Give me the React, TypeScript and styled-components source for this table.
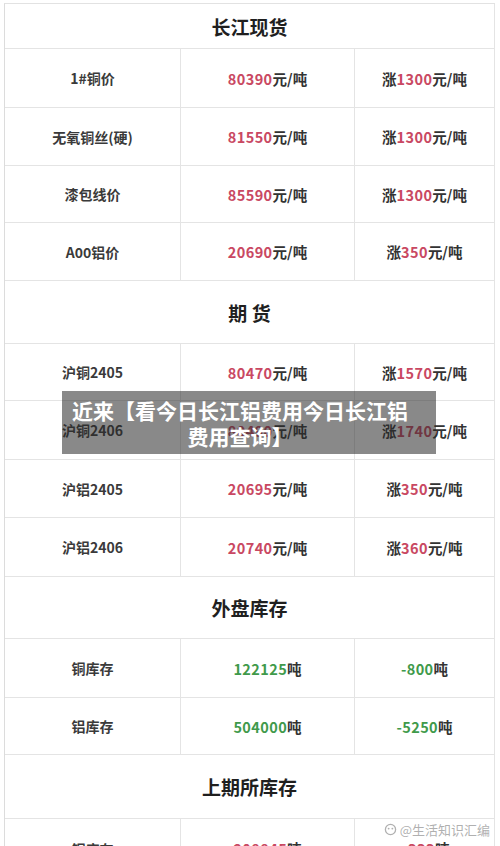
import React from "react";
import styled, { createGlobalStyle } from "styled-components";

const GlobalStyle = createGlobalStyle`
  html, body {
    margin: 0;
    padding: 0;
    background: #ffffff;
  }
  body {
    font-family: "Noto Sans CJK SC", "Noto Sans", sans-serif;
    color: #2a2a2a;
  }
`;

type Tone = "red" | "green";

type DataRow = {
  kind: "data";
  h: number;
  name: string;
  value: [string, string];
  change: [string, string, string];
  tone: Tone;
};
type HeadRow = { kind: "head"; h: number; title: string };
type Row = DataRow | HeadRow;

const rows: Row[] = [
  { kind: "head", h: 45, title: "长江现货" },
  { kind: "data", h: 59, name: "1#铜价", value: ["80390", "元/吨"], change: ["涨", "1300", "元/吨"], tone: "red" },
  { kind: "data", h: 58, name: "无氧铜丝(硬)", value: ["81550", "元/吨"], change: ["涨", "1300", "元/吨"], tone: "red" },
  { kind: "data", h: 57, name: "漆包线价", value: ["85590", "元/吨"], change: ["涨", "1300", "元/吨"], tone: "red" },
  { kind: "data", h: 58, name: "A00铝价", value: ["20690", "元/吨"], change: ["涨", "350", "元/吨"], tone: "red" },
  { kind: "head", h: 63, title: "期 货" },
  { kind: "data", h: 57, name: "沪铜2405", value: ["80470", "元/吨"], change: ["涨", "1570", "元/吨"], tone: "red" },
  { kind: "data", h: 59, name: "沪铜2406", value: ["80490", "元/吨"], change: ["涨", "1740", "元/吨"], tone: "red" },
  { kind: "data", h: 58, name: "沪铝2405", value: ["20695", "元/吨"], change: ["涨", "350", "元/吨"], tone: "red" },
  { kind: "data", h: 59, name: "沪铝2406", value: ["20740", "元/吨"], change: ["涨", "360", "元/吨"], tone: "red" },
  { kind: "head", h: 62, title: "外盘库存" },
  { kind: "data", h: 59, name: "铜库存", value: ["122125", "吨"], change: ["", "-800", "吨"], tone: "green" },
  { kind: "data", h: 57, name: "铝库存", value: ["504000", "吨"], change: ["", "-5250", "吨"], tone: "green" },
  { kind: "head", h: 64, title: "上期所库存" },
  { kind: "data", h: 60, name: "铜库存", value: ["208845", "吨"], change: ["+", "333", "吨"], tone: "red" },
];

const Page = styled.div`
  position: relative;
  width: 500px;
  height: 846px;
  overflow: hidden;
  padding: 3px 5px 0 4px;
  box-sizing: border-box;
`;

const Table = styled.div`
  border-top: 1px solid #e2e2e2;
  border-left: 1px solid #dcdcdc;
`;

const TableRow = styled.div<{ $h: number }>`
  display: grid;
  grid-template-columns: 176px 174px 1fr;
  height: ${(p) => p.$h}px;
`;

const Cell = styled.div`
  display: flex;
  align-items: center;
  justify-content: center;
  border-right: 1px solid #e4e4e4;
  border-bottom: 1px solid #e4e4e4;
  font-size: 14px;
  font-weight: 700;
  color: #3a3a3a;
  white-space: nowrap;
`;

const ValueCell = styled(Cell)`
  font-size: 14.5px;
  font-weight: 700;
`;

const HeadCell = styled(Cell)`
  grid-column: 1 / -1;
  font-size: 19px;
  font-weight: 700;
  color: #1f1f1f;
  white-space: pre;
`;

const Num = styled.span<{ $tone: Tone }>`
  color: ${(p) => (p.$tone === "red" ? "#c94862" : "#3f9a4b")};
  letter-spacing: 0.4px;
`;

const Unit = styled.span`
  color: #333333;
`;

const Caption = styled.div`
  position: absolute;
  left: 62px;
  top: 391px;
  width: 374px;
  height: 63px;
  box-sizing: border-box;
  padding: 6px 26px 0 8px;
  background: rgba(40, 40, 40, 0.55);
  color: #ffffff;
  font-size: 21px;
  line-height: 26px;
  font-weight: 700;
  text-align: center;
`;

const Watermark = styled.div`
  position: absolute;
  right: 10px;
  top: 820px;
  display: flex;
  align-items: center;
  gap: 3px;
  font-size: 13px;
  color: rgba(150, 150, 150, 0.75);
  font-weight: 400;
`;

export default function App() {
  return (
    <>
      <GlobalStyle />
      <Page>
        <Table>
          {rows.map((r, i) =>
            r.kind === "head" ? (
              <TableRow key={i} $h={r.h}>
                <HeadCell>{r.title}</HeadCell>
              </TableRow>
            ) : (
              <TableRow key={i} $h={r.h}>
                <Cell>{r.name}</Cell>
                <ValueCell>
                  <Num $tone={r.tone}>{r.value[0]}</Num>
                  <Unit>{r.value[1]}</Unit>
                </ValueCell>
                <ValueCell>
                  <Unit>{r.change[0]}</Unit>
                  <Num $tone={r.tone}>{r.change[1]}</Num>
                  <Unit>{r.change[2]}</Unit>
                </ValueCell>
              </TableRow>
            )
          )}
        </Table>
        <Caption>近来【看今日长江铝费用今日长江铝费用查询】</Caption>
        <Watermark>
          <svg width="13" height="13" viewBox="0 0 14 14">
            <circle cx="7" cy="7" r="5.5" fill="none" stroke="currentColor" strokeWidth="1.4" />
            <circle cx="5" cy="6" r="1" fill="currentColor" />
            <circle cx="9" cy="6" r="1" fill="currentColor" />
          </svg>
          <span>@生活知识汇编</span>
        </Watermark>
      </Page>
    </>
  );
}
